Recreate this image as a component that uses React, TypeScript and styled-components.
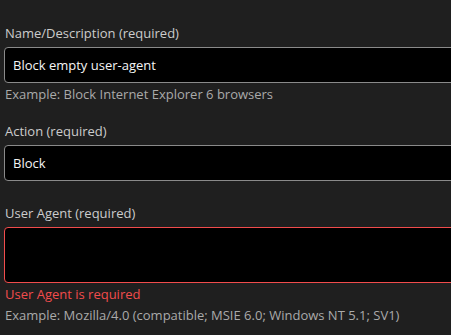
import styled, { createGlobalStyle } from "styled-components";

const GlobalStyle = createGlobalStyle`
	html, body {
		margin: 0;
		padding: 0;
		background: #1f1f1f;
		overflow: hidden;
	}
	body {
		font-family: "Open Sans", "Noto Sans", sans-serif;
	}
`;

interface IField {
	label: string;
	value?: string;
	multiline?: boolean;
	error?: string;
	hint?: string;
	gap: number;
}

const fields: IField[] = [
	{
		label: "Name/Description (required)",
		value: "Block empty user-agent",
		hint: "Example: Block Internet Explorer 6 browsers",
		gap: 17,
	},
	{
		label: "Action (required)",
		value: "Block",
		gap: 22,
	},
	{
		label: "User Agent (required)",
		multiline: true,
		error: "User Agent is required",
		hint: "Example: Mozilla/4.0 (compatible; MSIE 6.0; Windows NT 5.1; SV1)",
		gap: 0,
	},
];

export default function App() {
	return (
		<>
			<GlobalStyle />
			<Form>
				{fields.map((field) => (
					<Field key={field.label} gap={field.gap}>
						<Label>{field.label}</Label>
						<Input
							invalid={!!field.error}
							multiline={!!field.multiline}
						>
							{field.value}
						</Input>
						{field.error && <Error>{field.error}</Error>}
						{field.hint && <Hint>{field.hint}</Hint>}
					</Field>
				))}
			</Form>
		</>
	);
}

const Form = styled.div`
	width: 640px;
	padding: 23px 0 0 4px;
	display: flex;
	flex-direction: column;
`;

const Field = styled.div<{ gap: number }>`
	display: flex;
	flex-direction: column;
	margin-bottom: ${(props) => props.gap}px;
`;

const Label = styled.div`
	height: 20px;
	line-height: 20px;
	padding-left: 1px;
	margin-bottom: 4px;
	font-size: 13px;
	color: #cccccc;
`;

const Input = styled.div<{ invalid: boolean; multiline: boolean }>`
	box-sizing: border-box;
	height: ${(props) => (props.multiline ? 56 : 36)}px;
	padding: 0 8px;
	display: flex;
	align-items: center;
	background: #000000;
	border: 1px solid ${(props) => (props.invalid ? "#f14c4c" : "#8a8a8a")};
	border-radius: 4px;
	font-size: 13px;
	color: #f5f5f5;
`;

const Error = styled.div`
	height: 20px;
	line-height: 20px;
	margin-top: 1px;
	padding-left: 1px;
	font-size: 13px;
	color: #f14c4c;
`;

const Hint = styled.div`
	height: 20px;
	line-height: 20px;
	margin-top: 1px;
	padding-left: 1px;
	font-size: 13px;
	color: #aaaaaa;
`;
